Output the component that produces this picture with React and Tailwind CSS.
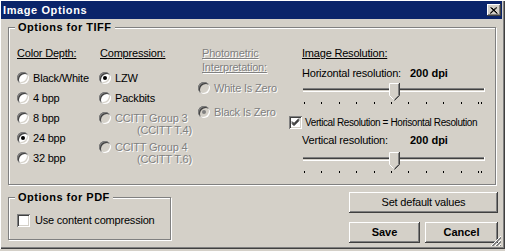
const FONT = "font-['Liberation_Sans',Arial,sans-serif]";
const DISABLED = 'text-[#808080] [text-shadow:1px_1px_0_#fff]';
const BEVEL = 'shadow-[inset_-1px_-1px_0_#404040,inset_1px_1px_0_#fff,inset_-2px_-2px_0_#808080,inset_2px_2px_0_#d4d0c8]';

function Radio({ checked, disabled }) {
  return (
    <span
      className={`flex h-[12px] w-[12px] shrink-0 items-center justify-center rounded-full shadow-[inset_1px_1px_0_#808080,inset_-1px_-1px_0_#fff,inset_2px_2px_0_#404040,inset_-2px_-2px_0_#d4d0c8] ${
        disabled ? 'bg-[#d4d0c8]' : 'bg-white'
      }`}
    >
      {checked && (
        <span className={`h-[4px] w-[4px] rounded-full ${disabled ? 'bg-[#808080]' : 'bg-black'}`} />
      )}
    </span>
  );
}

function Checkbox({ checked }) {
  return (
    <span className="flex h-[13px] w-[13px] shrink-0 items-center justify-center bg-white shadow-[inset_1px_1px_0_#808080,inset_-1px_-1px_0_#fff,inset_2px_2px_0_#404040,inset_-2px_-2px_0_#d4d0c8]">
      {checked && (
        <svg width="13" height="13" viewBox="0 0 13 13">
          <path d="M3 5.5 L5 7.5 L10 2.5 M3 6.5 L5 8.5 L10 3.5 M3 7.5 L5 9.5 L10 4.5" stroke="#000" strokeWidth="1" fill="none" />
        </svg>
      )}
    </span>
  );
}

function RadioRow({ label, checked, disabled, className = 'h-[20px]' }) {
  return (
    <div className={`flex items-center gap-[4px] ${className}`}>
      <Radio checked={checked} disabled={disabled} />
      <span className={`leading-[13px] ${disabled ? DISABLED : ''}`}>{label}</span>
    </div>
  );
}

function Slider() {
  const ticks = Array.from({ length: 11 }, (_, i) => Math.round(2 + i * 17.4));
  return (
    <svg width="184" height="26" className="block">
      <rect x="1" y="7" width="182" height="1" fill="#808080" />
      <rect x="1" y="8" width="182" height="1" fill="#404040" />
      <rect x="1" y="9" width="182" height="1" fill="#d4d0c8" />
      <rect x="1" y="10" width="182" height="1" fill="#fff" />
      <rect x="182" y="7" width="1" height="4" fill="#fff" />
      {ticks.map((x) => (
        <rect key={x} x={x} y="21" width="1" height="2" fill="#000" />
      ))}
      <rect x="179" y="21" width="1" height="2" fill="#000" />
      <polygon points="87,2 97,2 97,14 92,19 87,14" fill="#d4d0c8" />
      <polyline points="87.5,14.5 87.5,2.5 96.5,2.5" stroke="#fff" fill="none" />
      <polyline points="87.5,14.5 91.5,18.5" stroke="#fff" fill="none" />
      <polyline points="96.5,3 96.5,14.5 92.5,18.5" stroke="#808080" fill="none" />
      <polyline points="97.5,2 97.5,14.5 92.5,19.5" stroke="#404040" fill="none" />
    </svg>
  );
}

function Group({ title, className, children }) {
  return (
    <div
      className={`relative border border-[#808080] shadow-[1px_1px_0_#fff,inset_1px_1px_0_#fff] ${className}`}
    >
      <span className="absolute -top-[7px] left-[6px] bg-[#d4d0c8] px-[3px] font-bold leading-[13px] tracking-[0.5px]">
        {title}
      </span>
      {children}
    </div>
  );
}

function Button({ children, className }) {
  return (
    <button
      type="button"
      className={`flex h-[21px] items-center justify-center bg-[#d4d0c8] leading-[13px] ${BEVEL} ${className}`}
    >
      {children}
    </button>
  );
}

export default function App() {
  return (
    <div className={`h-[251px] w-[505px] bg-[#d4d0c8] text-[11px] tracking-[-0.2px] text-black ${FONT}`}>
      <div className="relative flex h-[249px] flex-col pl-[1px] pr-[3px] pt-[1px] shadow-[inset_1px_1px_0_#fff,inset_-1px_-1px_0_#404040,inset_-2px_-2px_0_#808080]">
        <div className="flex h-[18px] items-center justify-between bg-[#0a246a] pl-[2px] pr-[1px]">
          <span className="pt-[1px] font-bold leading-[13px] tracking-[0.6px] text-white">Image Options</span>
          <span className={`flex h-[12px] w-[14px] items-center justify-center bg-[#d4d0c8] ${BEVEL}`}>
            <svg width="8" height="7" viewBox="0 0 8 7">
              <path d="M0.5 0.5 L7 6.5 M7 0.5 L0.5 6.5 M1.5 0.5 L7.5 6.5 M6 0.5 L0 6.5" stroke="#000" strokeWidth="1" fill="none" />
            </svg>
          </span>
        </div>

        <Group title="Options for TIFF" className="ml-[7px] mt-[8px] h-[158px] w-[488px]">
          <div className="flex pl-[8px] pt-[18px]">
            <div className="w-[82px]">
              <div className="leading-[14px] underline underline-offset-[1px]">Color Depth:</div>
              <div className="mt-[8px]">
                <RadioRow label="Black/White" />
                <RadioRow label="4 bpp" />
                <RadioRow label="8 bpp" />
                <RadioRow label="24 bpp" checked />
                <RadioRow label="32 bpp" />
              </div>
            </div>

            <div className="w-[99px]">
              <div className="pl-[1px] leading-[14px] underline underline-offset-[1px]">Compression:</div>
              <div className="mt-[8px]">
                <RadioRow label="LZW" checked />
                <RadioRow label="Packbits" />
                <RadioRow label="CCITT Group 3" disabled />
                <div className={`-mt-[4px] h-[13px] pl-[38px] leading-[13px] ${DISABLED}`}>(CCITT T.4)</div>
                <RadioRow label="CCITT Group 4" disabled />
                <div className={`-mt-[4px] h-[13px] pl-[38px] leading-[13px] ${DISABLED}`}>(CCITT T.6)</div>
              </div>
            </div>

            <div className="w-[104px]">
              <div className={`pl-[4px] leading-[14px] underline underline-offset-[1px] ${DISABLED}`}>
                Photometric
                <br />
                Interpretation:
              </div>
              <div className="mt-[2px]">
                <RadioRow label="White Is Zero" disabled className="h-[24px]" />
                <RadioRow label="Black Is Zero" checked disabled className="h-[24px]" />
              </div>
            </div>

            <div className="w-[184px]">
              <div className="leading-[14px] underline underline-offset-[1px]">Image Resolution:</div>
              <div className="mt-[7px] flex leading-[13px]">
                <span className="w-[108px]">Horizontal resolution:</span>
                <span className="font-bold tracking-normal">200 dpi</span>
              </div>
              <div className="mt-[1px]">
                <Slider />
              </div>
              <div className="-ml-[13px] mt-[7px] flex h-[16px] items-center gap-[3px]">
                <Checkbox checked />
                <span className="whitespace-nowrap text-[10px] leading-[13px] tracking-[-0.4px]">
                  Vertical Resolution = Horisontal Resolution
                </span>
              </div>
              <div className="mt-[4px] flex leading-[13px]">
                <span className="w-[108px]">Vertical resolution:</span>
                <span className="font-bold tracking-normal">200 dpi</span>
              </div>
              <div className="mt-[3px]">
                <Slider />
              </div>
            </div>
          </div>
        </Group>

        <div className="flex">
          <Group title="Options for PDF" className="ml-[7px] mt-[12px] h-[43px] w-[163px]">
            <div className="mt-[14px] flex h-[16px] items-center gap-[5px] pl-[8px]">
              <Checkbox />
              <span className="leading-[13px]">Use content compression</span>
            </div>
          </Group>

          <div className="ml-auto mr-[4px] mt-[7px] flex w-[149px] flex-col gap-[9px]">
            <Button className="w-full">Set default values</Button>
            <div className="flex gap-[5px]">
              <Button className="w-[71px] font-bold tracking-normal">Save</Button>
              <Button className="w-[73px] font-bold tracking-normal">Cancel</Button>
            </div>
          </div>
        </div>

        <svg width="12" height="12" className="absolute bottom-[2px] right-[3px]">
          <path d="M11 1 L1 11 M11 5 L5 11 M11 9 L9 11" stroke="#fff" fill="none" />
          <path d="M11 2 L2 11 M11 3 L3 11 M11 6 L6 11 M11 7 L7 11 M11 10 L10 11" stroke="#808080" fill="none" />
        </svg>
      </div>
    </div>
  );
}
